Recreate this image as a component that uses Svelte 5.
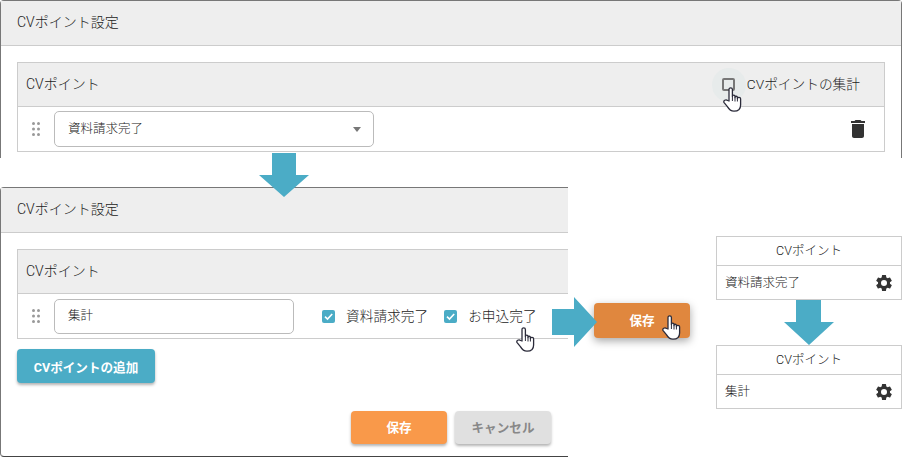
<script>
  const settingsTitle = "CVポイント設定";
  const summaries = ["資料請求完了", "集計"];
  const gear =
    "M19.14 12.94c.04-.3.06-.61.06-.94 0-.32-.02-.64-.07-.94l2.03-1.58a.49.49 0 0 0 .12-.61l-1.92-3.32a.49.49 0 0 0-.59-.22l-2.39.96c-.5-.38-1.03-.7-1.62-.94l-.36-2.54a.48.48 0 0 0-.48-.41h-3.84a.48.48 0 0 0-.47.41l-.36 2.54c-.59.24-1.13.57-1.62.94l-2.39-.96a.48.48 0 0 0-.59.22L2.74 8.87a.47.47 0 0 0 .12.61l2.03 1.58c-.05.3-.09.63-.09.94s.02.64.07.94l-2.03 1.58a.49.49 0 0 0-.12.61l1.92 3.32c.12.22.37.29.59.22l2.39-.96c.5.38 1.03.7 1.62.94l.36 2.54c.05.24.24.41.48.41h3.84c.24 0 .44-.17.47-.41l.36-2.54c.59-.24 1.13-.56 1.62-.94l2.39.96c.22.08.47 0 .59-.22l1.92-3.32a.47.47 0 0 0-.12-.61l-2.01-1.58zM12 15.6A3.6 3.6 0 1 1 12 8.4a3.6 3.6 0 0 1 0 7.2z";
</script>

{#snippet dots()}
  <svg class="dots" width="8" height="14" viewBox="0 0 8 14" fill="#999">
    {#each [1.5, 7, 12.5] as y}
      <circle cx="1.5" cy={y} r="1.5" />
      <circle cx="6.5" cy={y} r="1.5" />
    {/each}
  </svg>
{/snippet}

{#snippet check()}
  <span class="check">
    <svg width="13" height="13" viewBox="0 0 13 13" fill="none" stroke="#fff" stroke-width="1.6">
      <path d="M3 6.6l2.5 2.5L10.2 4" />
    </svg>
  </span>
{/snippet}

{#snippet hand(cls)}
  <svg class="hand {cls}" width="19" height="25" viewBox="0 0 19 25">
    <path
      d="M6 14V2.4C6 .4 9.4 .4 9.4 2.4V9.5C9.4 7.7 12 7.7 12 9.5v1C12 8.8 14.4 8.8 14.4 10.5v1C14.4 9.9 17.6 9.9 17.6 11.8V18C17.6 22 15.2 24.2 11 24.2 7.6 24.2 6 22.4 4.4 19.6L1.1 15.6C-.1 13.6 2.8 12 4.6 13.5Z"
      fill="#fff"
      stroke="#2b2b3a"
      stroke-width="1.3"
      stroke-linejoin="round"
    />
    <path d="M9.4 9.5V14M12 10.5V14.5M14.4 11.5V14.5" fill="none" stroke="#2b2b3a" stroke-width="1" />
  </svg>
{/snippet}

<div class="page">
  <section class="dialog first">
    <header class="dialog-head">{settingsTitle}</header>
    <div class="dialog-body">
      <div class="table">
        <div class="table-head">
          <span>CVポイント</span>
          <label class="sum">
            <span class="halo"><span class="box"></span></span>
            <span>CVポイントの集計</span>
          </label>
        </div>
        <div class="table-row row-a">
          {@render dots()}
          <div class="select">
            <span>資料請求完了</span>
            <span class="caret"></span>
          </div>
          <svg class="trash" width="24" height="24" viewBox="0 0 24 24" fill="#333">
            <path d="M6 19c0 1.1.9 2 2 2h8c1.1 0 2-.9 2-2V7H6v12zM19 4h-3.5l-1-1h-5l-1 1H5v2h14V4z" />
          </svg>
        </div>
      </div>
    </div>
  </section>

  <div class="lower">
    <section class="dialog second">
      <header class="dialog-head">{settingsTitle}</header>
      <div class="dialog-body">
        <div class="table open">
          <div class="table-head"><span>CVポイント</span></div>
          <div class="table-row row-b">
            {@render dots()}
            <div class="input"><span>集計</span></div>
            <div class="checks">
              <div class="opt">{@render check()}<span>資料請求完了</span></div>
              <div class="opt">{@render check()}<span>お申込完了</span></div>
            </div>
          </div>
        </div>
        <button class="btn add">CVポイントの追加</button>
        <div class="actions">
          <button class="btn save">保存</button>
          <button class="btn cancel">キャンセル</button>
        </div>
      </div>
    </section>

    <button class="btn pressed"><span>保存</span></button>

    <div class="summaries">
      {#each summaries as name}
        <div class="summary">
          <div class="summary-head">CVポイント</div>
          <div class="summary-row">
            <span>{name}</span>
            <svg width="20" height="20" viewBox="0 0 24 24" fill="#333"><path d={gear} /></svg>
          </div>
        </div>
      {/each}
    </div>
  </div>

  <!-- overlays: arrows and pointers drawn over the captures -->
  <svg class="arrow down-1" width="50" height="44" viewBox="0 0 50 44" fill="#4bacc6">
    <path d="M13 0h24v22h13L25 44 0 22h13z" />
  </svg>
  <svg class="arrow right" width="45" height="50" viewBox="0 0 45 50" fill="#4bacc6">
    <path d="M0 12h22V0l23 25-23 25V38H0z" />
  </svg>
  <svg class="arrow down-2" width="50" height="45" viewBox="0 0 50 45" fill="#4bacc6">
    <path d="M12 0h25v22h13L25 45 0 22h12z" />
  </svg>
  {@render hand("h1")}
  {@render hand("h2")}
  {@render hand("h3")}
</div>

<style>
  :global(body) {
    margin: 0;
    background: #fff;
  }
  .page {
    position: relative;
    width: 902px;
    height: 457px;
    overflow: hidden;
    font-family: Roboto, "Noto Sans CJK JP", sans-serif;
    font-size: 14px;
    font-weight: 300;
    color: #222;
  }
  .dialog {
    box-sizing: border-box;
    background: #fff;
    border: 1px solid #777;
    border-bottom: 0;
    border-radius: 4px 4px 0 0;
  }
  .first {
    height: 158px;
  }
  .dialog-head {
    box-sizing: border-box;
    height: 45px;
    padding-left: 16px;
    line-height: 43px;
    background: #eee;
    border-bottom: 1px solid #ccc;
  }
  .dialog-body {
    padding: 16px;
  }
  .table {
    box-sizing: border-box;
    border: 1px solid #ccc;
  }
  .table-head {
    display: flex;
    justify-content: space-between;
    align-items: center;
    box-sizing: border-box;
    height: 44px;
    padding: 0 8px;
    background: #eee;
    border-bottom: 1px solid #ccc;
  }
  .table-head > span,
  .sum > span:last-child {
    margin-bottom: 4px;
  }
  .sum {
    display: flex;
    align-items: center;
    gap: 1px;
    margin-right: 16px;
    font-size: 13.7px;
  }
  .halo {
    display: flex;
    align-items: center;
    justify-content: center;
    width: 34px;
    height: 34px;
    border-radius: 50%;
    background: #e7ebeb;
  }
  .box {
    box-sizing: border-box;
    width: 13px;
    height: 13px;
    border: 2px solid #777;
    border-radius: 2px;
  }
  .table-row {
    display: flex;
    align-items: center;
    box-sizing: border-box;
    height: 44px;
    padding-left: 14px;
  }
  .dots {
    flex: none;
    margin-right: 14px;
  }
  .select,
  .input {
    display: flex;
    align-items: center;
    box-sizing: border-box;
    border: 1px solid #bbb;
    border-radius: 5px;
    padding-left: 13px;
    font-size: 12.5px;
  }
  .select > span:first-child,
  .input > span {
    margin-bottom: 3px;
  }
  .select {
    justify-content: space-between;
    width: 320px;
    height: 36px;
  }
  .caret {
    width: 0;
    height: 0;
    margin-right: 12px;
    border: 4.5px solid transparent;
    border-top: 5px solid #777;
    border-bottom: 0;
  }
  .trash {
    margin-left: auto;
    margin-right: 14px;
  }
  .second {
    flex: none;
    width: 568px;
    height: 270px;
    border-right: 0;
    border-bottom: 1px solid #444;
    border-radius: 4px 0 0 4px;
  }
  .open {
    width: 551px;
    border-right: 0;
  }
  .row-b .input {
    width: 240px;
    height: 35px;
  }
  .checks {
    display: flex;
    gap: 16px;
    margin-left: 28px;
  }
  .opt {
    display: flex;
    align-items: center;
    gap: 11px;
    font-size: 13.7px;
  }
  .opt > span:last-child {
    margin-bottom: 3px;
  }
  .check {
    display: flex;
    width: 13px;
    height: 13px;
    background: #4bacc6;
    border-radius: 2px;
  }
  .btn {
    display: block;
    border: 0;
    border-radius: 4px;
    font-family: inherit;
    font-weight: 700;
    font-size: 12.6px;
    color: #fff;
    padding: 0;
    box-shadow: 0 2px 3px rgba(0, 0, 0, 0.3);
  }
  .add {
    width: 138px;
    height: 34px;
    margin-top: 10px;
    background: #4bacc6;
  }
  .actions {
    display: flex;
    justify-content: flex-end;
    gap: 8px;
    margin-top: 28px;
    margin-right: 1px;
  }
  .save,
  .cancel {
    width: 96px;
    height: 33px;
    padding-bottom: 2px;
  }
  .save {
    background: #f9994a;
  }
  .cancel {
    background: #e0e0e0;
    color: #888;
  }
  .lower {
    display: flex;
    align-items: flex-start;
    margin-top: 29px;
  }
  .pressed {
    flex: none;
    width: 96px;
    height: 35px;
    margin: 116px 0 0 26px;
    padding-bottom: 3px;
    background: #e0873e;
    box-shadow: 0 3px 8px rgba(0, 0, 0, 0.35);
  }
  .summaries {
    display: flex;
    flex-direction: column;
    gap: 45px;
    flex: none;
    width: 186px;
    margin: 49px 0 0 26px;
  }
  .summary {
    box-sizing: border-box;
    height: 64px;
    border: 1px solid #ccc;
    font-size: 12.5px;
  }
  .summary-head {
    box-sizing: border-box;
    height: 29px;
    line-height: 28px;
    text-align: center;
    border-bottom: 1px solid #ccc;
  }
  .summary-row {
    display: flex;
    justify-content: space-between;
    align-items: center;
    height: 33px;
    padding: 0 7px 0 8px;
  }
  .summary-row > span {
    margin-bottom: 3px;
  }
  .arrow,
  .hand {
    position: absolute;
  }
  .down-1 {
    left: 259px;
    top: 153px;
  }
  .right {
    left: 552px;
    top: 297px;
  }
  .down-2 {
    left: 784px;
    top: 300px;
  }
  .h1 {
    left: 723px;
    top: 87px;
  }
  .h2 {
    left: 516px;
    top: 327px;
  }
  .h3 {
    left: 662px;
    top: 315px;
  }
</style>
